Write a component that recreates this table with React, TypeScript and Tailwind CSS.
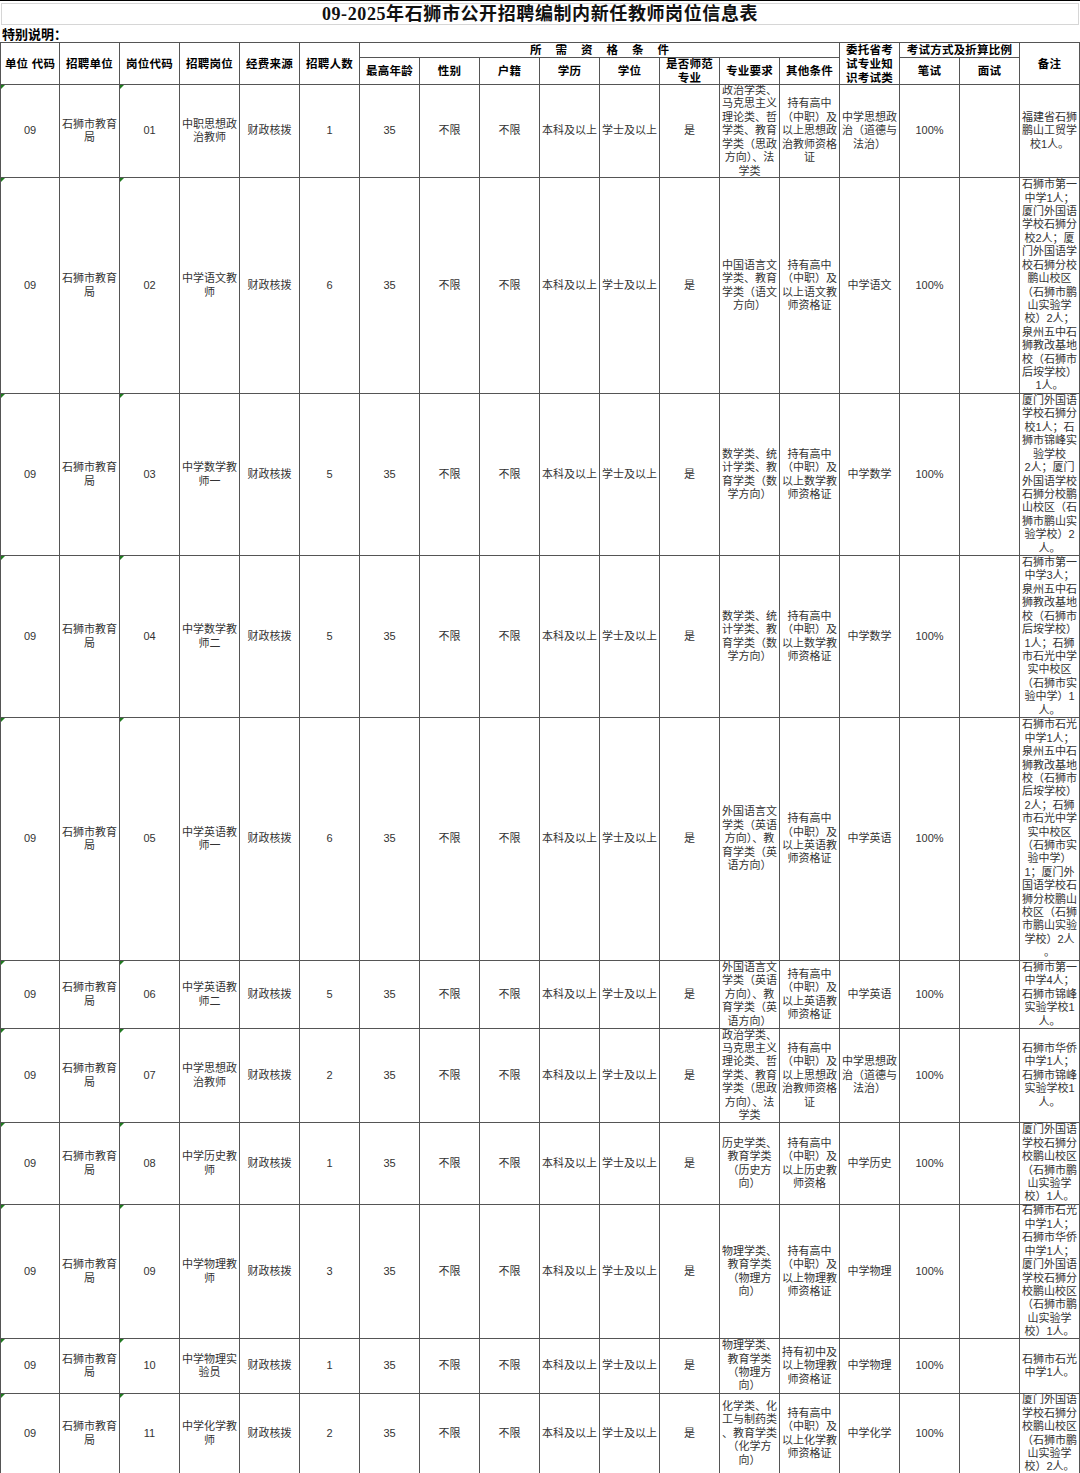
import React from "react";

type Row = {
  h: string;
  pos: string;
  title: string[];
  n: string;
  major: string[];
  other: string[];
  exam: string[];
  note: string[];
};

const polMajor = ["政治学类、", "马克思主义", "理论类、哲", "学类、教育", "学类（思政", "方向）、法", "学类"];
const mathMajor = ["数学类、统", "计学类、教", "育学类（数", "学方向）"];
const engMajor = ["外国语言文", "学类（英语", "方向）、教", "育学类（英", "语方向）"];
const phyMajor = ["物理学类、", "教育学类", "（物理方", "向）"];
const cert = (s: string) => ["持有高中", "（中职）及", `以上${s}教`, "师资格证"];
const polOther = ["持有高中", "（中职）及", "以上思想政", "治教师资格", "证"];
const polExam = ["中学思想政", "治（道德与", "法治）"];

const rows: Row[] = [
  {
    h: "93",
    pos: "01",
    title: ["中职思想政", "治教师"],
    n: "1",
    major: polMajor,
    other: polOther,
    exam: polExam,
    note: ["福建省石狮", "鹏山工贸学", "校1人。"],
  },
  {
    h: "216",
    pos: "02",
    title: ["中学语文教", "师"],
    n: "6",
    major: ["中国语言文", "学类、教育", "学类（语文", "方向）"],
    other: cert("语文"),
    exam: ["中学语文"],
    note: [
      "石狮市第一",
      "中学1人；",
      "厦门外国语",
      "学校石狮分",
      "校2人；厦",
      "门外国语学",
      "校石狮分校",
      "鹏山校区",
      "（石狮市鹏",
      "山实验学",
      "校）2人；",
      "泉州五中石",
      "狮教改基地",
      "校（石狮市",
      "后垵学校）",
      "1人。",
    ],
  },
  {
    h: "162",
    pos: "03",
    title: ["中学数学教", "师一"],
    n: "5",
    major: mathMajor,
    other: cert("数学"),
    exam: ["中学数学"],
    note: [
      "厦门外国语",
      "学校石狮分",
      "校1人；石",
      "狮市锦峰实",
      "验学校",
      "2人；厦门",
      "外国语学校",
      "石狮分校鹏",
      "山校区（石",
      "狮市鹏山实",
      "验学校）2",
      "人。",
    ],
  },
  {
    h: "162",
    pos: "04",
    title: ["中学数学教", "师二"],
    n: "5",
    major: mathMajor,
    other: cert("数学"),
    exam: ["中学数学"],
    note: [
      "石狮市第一",
      "中学3人；",
      "泉州五中石",
      "狮教改基地",
      "校（石狮市",
      "后垵学校）",
      "1人；石狮",
      "市石光中学",
      "实中校区",
      "（石狮市实",
      "验中学）1",
      "人。",
    ],
  },
  {
    h: "243",
    pos: "05",
    title: ["中学英语教", "师一"],
    n: "6",
    major: engMajor,
    other: cert("英语"),
    exam: ["中学英语"],
    note: [
      "石狮市石光",
      "中学1人；",
      "泉州五中石",
      "狮教改基地",
      "校（石狮市",
      "后垵学校）",
      "2人；石狮",
      "市石光中学",
      "实中校区",
      "（石狮市实",
      "验中学）",
      "1；厦门外",
      "国语学校石",
      "狮分校鹏山",
      "校区（石狮",
      "市鹏山实验",
      "学校）2人",
      "。",
    ],
  },
  {
    h: "68",
    pos: "06",
    title: ["中学英语教", "师二"],
    n: "5",
    major: engMajor,
    other: cert("英语"),
    exam: ["中学英语"],
    note: ["石狮市第一", "中学4人；", "石狮市锦峰", "实验学校1", "人。"],
  },
  {
    h: "94",
    pos: "07",
    title: ["中学思想政", "治教师"],
    n: "2",
    major: polMajor,
    other: polOther,
    exam: polExam,
    note: ["石狮市华侨", "中学1人；", "石狮市锦峰", "实验学校1", "人。"],
  },
  {
    h: "82",
    pos: "08",
    title: ["中学历史教", "师"],
    n: "1",
    major: ["历史学类、", "教育学类", "（历史方", "向）"],
    other: ["持有高中", "（中职）及", "以上历史教", "师资格"],
    exam: ["中学历史"],
    note: ["厦门外国语", "学校石狮分", "校鹏山校区", "（石狮市鹏", "山实验学", "校）1人。"],
  },
  {
    h: "134",
    pos: "09",
    title: ["中学物理教", "师"],
    n: "3",
    major: phyMajor,
    other: cert("物理"),
    exam: ["中学物理"],
    note: [
      "石狮市石光",
      "中学1人；",
      "石狮市华侨",
      "中学1人；",
      "厦门外国语",
      "学校石狮分",
      "校鹏山校区",
      "（石狮市鹏",
      "山实验学",
      "校）1人。",
    ],
  },
  {
    h: "55",
    pos: "10",
    title: ["中学物理实", "验员"],
    n: "1",
    major: phyMajor,
    other: ["持有初中及", "以上物理教", "师资格证"],
    exam: ["中学物理"],
    note: ["石狮市石光", "中学1人。"],
  },
  {
    h: "80",
    pos: "11",
    title: ["中学化学教", "师"],
    n: "2",
    major: ["化学类、化", "工与制药类", "、教育学类", "（化学方", "向）"],
    other: cert("化学"),
    exam: ["中学化学"],
    note: ["厦门外国语", "学校石狮分", "校鹏山校区", "（石狮市鹏", "山实验学", "校）2人。"],
  },
];

function Cell({
  lines,
  className = "",
  mark = false,
}: {
  lines: string[];
  className?: string;
  mark?: boolean;
}) {
  return (
    <div
      className={`relative flex flex-col items-center justify-center overflow-hidden border-r border-b border-[#555] text-center whitespace-nowrap ${className}`}
    >
      {mark && (
        <div className="absolute left-0 top-0 h-0 w-0 border-t-[4px] border-r-[4px] border-t-[#1f7a1f] border-r-transparent" />
      )}
      {lines.map((l, i) => (
        <span key={i} className="block">
          {l}
        </span>
      ))}
    </div>
  );
}

const H = "text-[11.5px] font-bold text-black leading-[14px] tracking-[0.2px]";
const D = "text-[11px] text-[#333] leading-[13.4px]";

export default function App() {
  return (
    <div className="relative h-[1473px] w-[1080px] overflow-hidden bg-white font-['Liberation_Sans','Noto_Sans_CJK_SC',sans-serif]">
      <div className="h-[26px] border-t border-black px-[1px] pt-[2px]">
        <div className="flex h-[22px] items-center justify-center border border-[#d6d6d6] font-['Liberation_Serif','Noto_Sans_CJK_SC',serif] text-[18px] font-bold tracking-[0.6px] text-[#111]">
          09-2025年石狮市公开招聘编制内新任教师岗位信息表
        </div>
      </div>
      <div className="h-[16px] pl-[2px] text-[13px] font-bold leading-[17px] text-black">特别说明：</div>
      <div className="grid grid-cols-[59px_repeat(17,60px)] grid-rows-[15px_27px_93px_216px_162px_162px_243px_68px_94px_82px_134px_55px_80px] border-l border-t border-[#555]">
        <Cell className={`row-span-2 ${H}`} lines={["单位  代码"]} />
        <Cell className={`row-span-2 ${H}`} lines={["招聘单位"]} />
        <Cell className={`row-span-2 ${H}`} lines={["岗位代码"]} />
        <Cell className={`row-span-2 ${H}`} lines={["招聘岗位"]} />
        <Cell className={`row-span-2 ${H}`} lines={["经费来源"]} />
        <Cell className={`row-span-2 ${H}`} lines={["招聘人数"]} />
        <Cell className={`col-span-8 pl-[14px] ${H} tracking-[14px]`} lines={["所需资格条件"]} />
        <Cell className={`row-span-2 ${H}`} lines={["委托省考", "试专业知", "识考试类"]} />
        <Cell className={`col-span-2 ${H}`} lines={["考试方式及折算比例"]} />
        <Cell className={`row-span-2 ${H}`} lines={["备注"]} />
        <Cell className={H} lines={["最高年龄"]} />
        <Cell className={H} lines={["性别"]} />
        <Cell className={H} lines={["户籍"]} />
        <Cell className={H} lines={["学历"]} />
        <Cell className={H} lines={["学位"]} />
        <Cell className={`${H} leading-[12.5px]`} lines={["是否师范", "专业"]} />
        <Cell className={H} lines={["专业要求"]} />
        <Cell className={H} lines={["其他条件"]} />
        <Cell className={H} lines={["笔试"]} />
        <Cell className={H} lines={["面试"]} />
        {rows.map((r) => (
          <React.Fragment key={r.pos}>
            <Cell className={D} lines={["09"]} mark />
            <Cell className={D} lines={["石狮市教育", "局"]} />
            <Cell className={D} lines={[r.pos]} mark />
            <Cell className={D} lines={r.title} />
            <Cell className={D} lines={["财政核拨"]} />
            <Cell className={D} lines={[r.n]} />
            <Cell className={D} lines={["35"]} />
            <Cell className={D} lines={["不限"]} />
            <Cell className={D} lines={["不限"]} />
            <Cell className={D} lines={["本科及以上"]} />
            <Cell className={D} lines={["学士及以上"]} />
            <Cell className={D} lines={["是"]} />
            <Cell className={D} lines={r.major} />
            <Cell className={D} lines={r.other} />
            <Cell className={D} lines={r.exam} />
            <Cell className={D} lines={["100%"]} />
            <Cell className={D} lines={[]} />
            <Cell className={D} lines={r.note} />
          </React.Fragment>
        ))}
      </div>
    </div>
  );
}
